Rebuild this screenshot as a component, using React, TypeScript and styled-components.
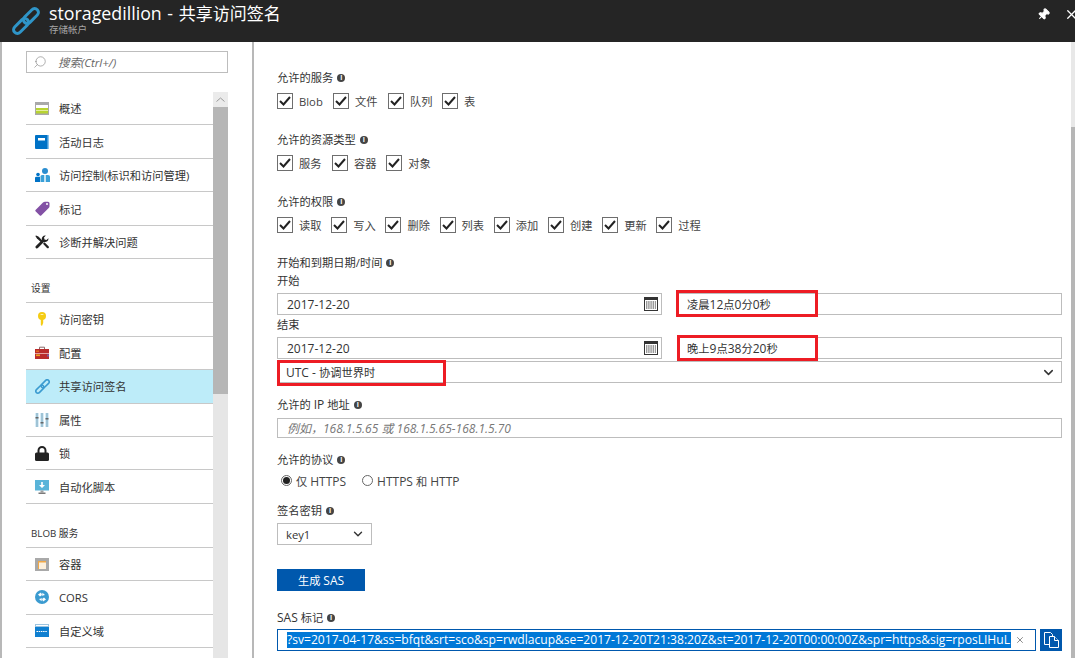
import React from "react";
import styled, { createGlobalStyle } from "styled-components";
import { Pin, X, ChevronDown, Search } from "lucide-react";

const FONT = `"Open Sans", "Noto Sans CJK SC", sans-serif`;

const Global = createGlobalStyle`
html, body {
    margin: 0;
    padding: 0;
    height: 100%;
    overflow: hidden;
    background: #fff;
}
* { box-sizing: border-box; }
body {
    font-family: ${FONT};
    font-size: 11.25px;
    color: #333;
}
`;

const Page = styled.div`
width: 1075px;
height: 658px;
display: flex;
flex-direction: column;
overflow: hidden;
`;

/* Latin runs sit a little larger than the CJK around them */
const Lat = styled.span`
font-size: 12px;
`;

/* Header */
const Header = styled.header`
height: 42px;
flex: none;
background: #252525;
display: flex;
align-items: center;
padding-left: 12px;
`;
const TitleBox = styled.div`
margin-left: 9px;
flex: 1;
display: flex;
flex-direction: column;
`;
const Title = styled.div`
font-size: 17px;
line-height: 20px;
color: #fff;
margin-top: -5px;
`;
const TitleLat = styled.span`
font-size: 17.8px;
word-spacing: 1px;
`;
const SubTitle = styled.div`
font-size: 9.5px;
line-height: 11px;
color: #a6a6a6;
`;
const HeaderTools = styled.div`
display: flex;
align-items: center;
width: 38px;
margin-top: -14px;
color: #fff;
overflow: hidden;
svg { flex: none; }
`;
const CloseMark = styled(X)`
margin-left: 14px;
`;

const Body = styled.div`
flex: 1;
display: flex;
min-height: 0;
`;

/* Sidebar */
const Sidebar = styled.aside`
width: 254px;
flex: none;
border-left: 2px solid #b8b8b8;
border-right: 2px solid #b8b8b8;
padding: 9px 24px 0 24px;
display: flex;
flex-direction: column;
`;
const SearchBox = styled.div`
height: 22px;
flex: none;
border: 1px solid #bdbdbd;
display: flex;
align-items: center;
padding-left: 6px;
color: #777;
font-size: 11.5px;
font-style: italic;
span { margin-left: 11px; color: #666; }
`;
const MenuWrap = styled.div`
margin-top: 19px;
display: flex;
flex: 1;
min-height: 0;
`;
const MenuList = styled.div`
flex: 1;
min-width: 0;
`;
const MenuRow = styled.div<{ $active?: boolean }>`
height: 33.45px;
display: flex;
align-items: center;
padding-left: 8px;
border-bottom: 1px solid #c8c8c8;
background: ${(p) => (p.$active ? "#bdecf9" : "transparent")};
color: #333;
white-space: nowrap;
`;
const MenuIcon = styled.span`
width: 16px;
height: 16px;
margin-right: 9px;
display: flex;
align-items: center;
justify-content: center;
flex: none;
`;
const SectionRow = styled.div`
height: 44px;
display: flex;
align-items: flex-end;
padding: 0 0 7px 5px;
border-bottom: 1px solid #c8c8c8;
font-size: 9.75px;
color: #333;
`;
const SideScroll = styled.div`
width: 15px;
flex: none;
background: #e6e6e6;
display: flex;
flex-direction: column;
`;
const ScrollUp = styled.div`
height: 15px;
background: #ebebeb;
display: flex;
align-items: center;
justify-content: center;
`;
const ScrollThumb = styled.div`
height: 287px;
background: #b6b6b6;
`;

/* Form */
const Main = styled.main`
flex: 1;
display: flex;
min-width: 0;
`;
const Form = styled.div`
flex: 1;
padding: 28px 9px 0 23px;
min-width: 0;
display: flex;
flex-direction: column;
`;
const PageScroll = styled.div`
width: 4px;
flex: none;
display: flex;
flex-direction: column;
background: #b6b6b6;
`;
const PageScrollTrack = styled.div`
height: 85px;
background: #e8e8e8;
`;

const FieldLabel = styled.div<{ $top?: number }>`
height: 16px;
line-height: 16px;
margin-top: ${(p) => p.$top ?? 0}px;
display: flex;
align-items: center;
color: #333;
white-space: pre;
`;
const Info = styled.span`
width: 8px;
height: 8px;
border-radius: 50%;
background: #444;
margin-left: 4px;
color: #fff;
font-size: 7px;
line-height: 8px;
font-weight: 700;
text-align: center;
flex: none;
`;
const CheckRow = styled.div`
display: flex;
margin-top: 7px;
height: 16px;
`;
const CheckItem = styled.label<{ $w?: number }>`
display: flex;
align-items: center;
width: ${(p) => p.$w ?? 54.2}px;
color: #444;
flex: none;
`;
const CheckBox = styled.span`
width: 16px;
height: 16px;
border: 1px solid #6e6e6e;
display: flex;
align-items: center;
justify-content: center;
margin-right: 6px;
flex: none;
`;
const TextBox = styled.div<{ $w?: number; $h?: number; $top?: number; $pl?: number; $pr?: number }>`
position: relative;
height: ${(p) => p.$h ?? 22}px;
width: ${(p) => (p.$w ? `${p.$w}px` : "100%")};
margin-top: ${(p) => p.$top ?? 0}px;
border: 1px solid #bdbdbd;
background: #fff;
display: flex;
align-items: center;
justify-content: space-between;
padding: 0 ${(p) => p.$pr ?? 5}px 0 ${(p) => p.$pl ?? 9}px;
color: #333;
white-space: pre;
`;
const BoxText = styled.span`
display: block;
`;
const Hint = styled.span`
font-style: italic;
color: #777;
font-size: 12px;
`;
const DateRow = styled.div<{ $top?: number }>`
display: grid;
grid-template-columns: 385px 1fr;
column-gap: 15px;
margin-top: ${(p) => p.$top ?? 0}px;
`;
const RedMark = styled.span<{ $t: number; $l: number; $w: number; $h: number }>`
position: absolute;
top: ${(p) => p.$t}px;
left: ${(p) => p.$l}px;
width: ${(p) => p.$w}px;
height: ${(p) => p.$h}px;
border: 3px solid #ed1c24;
pointer-events: none;
`;
const RadioRow = styled.div`
display: flex;
align-items: center;
margin-top: 5px;
margin-left: 4px;
height: 16px;
color: #444;
`;
const Radio = styled.span<{ $on?: boolean }>`
width: 11px;
height: 11px;
border-radius: 50%;
border: 1px solid #666;
margin-right: 4px;
display: flex;
align-items: center;
justify-content: center;
margin-top: -2px;
&::after {
    content: "";
    width: 7px;
    height: 7px;
    border-radius: 50%;
    background: ${(p) => (p.$on ? "#222" : "transparent")};
}
`;
const RadioText = styled.span`
margin-right: 16px;
white-space: pre;
`;
const PrimaryButton = styled.button`
display: block;
width: 88px;
height: 22px;
margin-top: 24px;
border: none;
background: #0058ad;
color: #fff;
font-family: ${FONT};
font-size: 11.25px;
padding: 0;
`;
const TokenRow = styled.div`
display: flex;
align-items: stretch;
margin-top: 3px;
gap: 4px;
height: 22px;
`;
const TokenBox = styled.div`
flex: 1;
min-width: 0;
border: 1px solid #0058ad;
display: flex;
align-items: center;
padding-left: 9px;
overflow: hidden;
`;
const Selected = styled.span`
width: 724px;
flex: none;
overflow: hidden;
white-space: nowrap;
background: #0078d7;
color: #fff;
font-size: 12.1px;
line-height: 16px;
`;
const Clear = styled.span`
margin-left: 4px;
display: flex;
color: #777;
`;
const CopyButton = styled.div`
width: 22px;
flex: none;
background: #0058ad;
display: flex;
align-items: center;
justify-content: center;
`;

/* Drawn icons */
const LinkMark = ({ size, stroke }: { size: number; stroke: string }) => (
    <svg width={size} height={size} viewBox="0 0 28 28" fill="none" stroke={stroke} strokeWidth="3">
        <g transform="rotate(-45 14 14)">
            <rect x="-2" y="10.2" width="18" height="7.6" rx="3.8" />
            <rect x="12" y="10.2" width="18" height="7.6" rx="3.8" />
        </g>
    </svg>
);
const Overview = () => (
    <svg width="14" height="13" viewBox="0 0 14 13">
        <rect width="14" height="13" fill="#a9a9a9" />
        <rect x="1" y="3" width="12" height="3" fill="#fff" />
        <rect x="1" y="6" width="12" height="5.5" fill="#b8d432" />
        <rect x="1" y="8" width="12" height="1" fill="#e4ee9e" />
    </svg>
);
const LogBook = () => (
    <svg width="14" height="14" viewBox="0 0 14 14">
        <rect width="14" height="14" rx="1" fill="#0072c6" />
        <rect x="12.5" width="1.5" height="14" fill="#8cc4ec" />
        <rect x="3" y="3" width="7" height="2.5" fill="#fff" />
    </svg>
);
const Access = () => (
    <svg width="15" height="14" viewBox="0 0 15 14">
        <circle cx="10" cy="3" r="3" fill="#2a8dd0" />
        <path d="M5.5 14V8.5q0-1.5 1.5-1.5h6q2 0 2 1.5V14z" fill="#3aa0d8" />
        <path d="M9.3 7h1.4v7H9.3z" fill="#fff" />
        <circle cx="3" cy="6.5" r="1.8" fill="#0072c6" />
        <path d="M0 14V10q0-1.3 1.3-1.3h3.7V14z" fill="#0072c6" />
    </svg>
);
const Tag = () => (
    <svg width="15" height="15" viewBox="0 0 15 15">
        <path d="M0.5 9 8 1.5q.8-.8 2-.8h3q1.5 0 1.5 1.5v3q0 1-.8 1.8L6.2 14.4q-.7.6-1.4 0L.5 10.2q-.5-.6 0-1.2z" fill="#8351a5" />
        <circle cx="12" cy="3" r="1" fill="#fff" />
    </svg>
);
const Tools = () => (
    <svg width="14" height="14" viewBox="0 0 14 14" fill="#222">
        <path d="M1 0.5 3.4 1.6 8 6.3 6.5 7.8 1.8 3.2.4 1z" />
        <path d="M13.4 3.2A3.4 3.4 0 0 1 8.9 6.9L2.9 13a1.4 1.4 0 0 1-2-2L7 5.1A3.4 3.4 0 0 1 10.8.6L9 2.5l.5 2 2 .5z" />
        <path d="M8 8.8 9.5 7.3 13.5 11.3a1.1 1.1 0 0 1-1.5 1.7z" />
    </svg>
);
const KeyMark = () => (
    <svg width="10" height="14" viewBox="0 0 10 14">
        <circle cx="5" cy="4" r="4" fill="#f5cc14" />
        <path d="M3.8 6h2.4v5L5 14 3.8 13z" fill="#f5cc14" />
        <rect x="3.6" y="2" width="2.8" height="1" fill="#fff3a8" />
    </svg>
);
const Toolbox = () => (
    <svg width="14" height="13" viewBox="0 0 14 13">
        <path d="M4.5 3V1.2h5V3" stroke="#8a6a6a" fill="none" />
        <rect y="3" width="14" height="10" fill="#ba2b2b" />
        <rect y="7" width="14" height="1" fill="#e4a0a0" />
        <rect x="1" y="8.5" width="4" height="1.6" fill="#eda51f" />
        <rect x="1" y="4.5" width="3" height="1.5" fill="#e06a1e" />
        <rect x="12" y="8.5" width="2" height="2" fill="#7a5aa8" />
    </svg>
);
const Sliders = () => (
    <svg width="14" height="14" viewBox="0 0 14 14">
        <rect x="0.5" width="3" height="14" fill="#b4dcf0" />
        <rect x="5.5" width="3" height="14" fill="#b4dcf0" />
        <rect x="10.5" width="3" height="14" fill="#b4dcf0" />
        <rect x="1.5" width="1" height="14" fill="#8aaaba" />
        <rect x="6.5" width="1" height="14" fill="#8aaaba" />
        <rect x="11.5" width="1" height="14" fill="#8aaaba" />
        <rect x="0.5" y="4" width="3" height="1.5" fill="#666" />
        <rect x="5.5" y="9" width="3" height="1.5" fill="#666" />
        <rect x="10.5" y="5" width="3" height="1.5" fill="#666" />
    </svg>
);
const Lock = () => (
    <svg width="14" height="15" viewBox="0 0 14 15">
        <path d="M3.5 7V4.5a3.5 3.5 0 0 1 7 0V7" fill="none" stroke="#222" strokeWidth="2" />
        <rect y="6.5" width="14" height="8.5" rx="1.5" fill="#222" />
    </svg>
);
const Monitor = () => (
    <svg width="14" height="14" viewBox="0 0 14 14">
        <rect width="14" height="10.5" fill="#59b4d9" />
        <path d="M6.2 2h1.6v3H10L7 8 4 5h2.2z" fill="#fff" />
        <rect x="5.5" y="10.5" width="3" height="2" fill="#a0a0a0" />
        <rect x="3.5" y="12.5" width="7" height="1.5" fill="#7a7a7a" />
    </svg>
);
const Container = () => (
    <svg width="14" height="13" viewBox="0 0 14 13">
        <rect width="14" height="13" fill="#a9a9a9" />
        <rect x="3" y="3" width="8" height="8" fill="#fdf0dc" />
        <rect x="3" y="3" width="8" height="1.5" fill="#f0a848" />
        <rect x="3" y="3" width="1" height="8" fill="#f0a848" />
    </svg>
);
const Cors = () => (
    <svg width="14" height="14" viewBox="0 0 14 14">
        <circle cx="7" cy="7" r="7" fill="#3b9bd0" />
        <path d="M3 4.500 6 2.500l1 2.500-2 1.500zM11 9.500 8 11.500l-1-2.500 2-1.500zM4 9l3-.8-.5 3zM10 5 7 5.800l.5-3z" fill="#fff" />
    </svg>
);
const DomainMark = () => (
    <svg width="14" height="13" viewBox="0 0 14 13">
        <rect width="14" height="13" fill="#0f7fd0" />
        <rect width="14" height="3" fill="#9cc4e0" />
        <rect x="1" y="1" width="12" height="1" fill="#fff" />
        <path d="M1.500 7.500h11" stroke="#fff" strokeDasharray="1.500 .7" />
    </svg>
);
const Calendar = () => (
    <svg width="14" height="14" viewBox="0 0 14 14">
        <rect x=".5" y=".5" width="13" height="13" fill="#fff" stroke="#333" />
        <rect width="14" height="3" fill="#333" />
        <path d="M2 5h10M2 7h10M2 9h10M2 11h10" stroke="#333" strokeDasharray="1.400 .8" />
    </svg>
);
const Copy = () => (
    <svg width="15" height="16" viewBox="0 0 15 16" fill="#0058ad" stroke="#fff">
        <path d="M.5.500h6l2 2v10h-8z" />
        <path d="M5.500 4.500h5l4 4v7h-9z" />
        <path d="M10.500 4.500v4h4" />
    </svg>
);
const Tick = () => (
    <svg width="12" height="10" viewBox="0 0 12 10" fill="none" stroke="#222" strokeWidth="2">
        <path d="M1 5l3.500 3.500L11 1" />
    </svg>
);

const topMenu = [
    { icon: <Overview />, text: "概述" },
    { icon: <LogBook />, text: "活动日志" },
    { icon: <Access />, text: "访问控制(标识和访问管理)" },
    { icon: <Tag />, text: "标记" },
    { icon: <Tools />, text: "诊断并解决问题" },
];
const settingsMenu = [
    { icon: <KeyMark />, text: "访问密钥" },
    { icon: <Toolbox />, text: "配置" },
    { icon: <LinkMark size={15} stroke="#3b9bd0" />, text: "共享访问签名", active: true },
    { icon: <Sliders />, text: "属性" },
    { icon: <Lock />, text: "锁" },
    { icon: <Monitor />, text: "自动化脚本" },
];
const blobMenu = [
    { icon: <Container />, text: "容器" },
    { icon: <Cors />, text: "CORS" },
    { icon: <DomainMark />, text: "自定义域" },
];

type MenuEntry = { icon: React.ReactNode; text: string; active?: boolean };
const MenuGroup = ({ items }: { items: MenuEntry[] }) => (
    <>
        {items.map((m) => (
            <MenuRow key={m.text} $active={m.active}>
                <MenuIcon>{m.icon}</MenuIcon>
                {m.text}
            </MenuRow>
        ))}
    </>
);

const Checks = ({ items }: { items: [string, number?][] }) => (
    <CheckRow>
        {items.map(([text, w]) => (
            <CheckItem key={text} $w={w}>
                <CheckBox><Tick /></CheckBox>
                {text}
            </CheckItem>
        ))}
    </CheckRow>
);

const Label = ({ top, children }: { top?: number; children: React.ReactNode }) => (
    <FieldLabel $top={top}>
        <span>{children}</span>
        <Info>i</Info>
    </FieldLabel>
);

const TOKEN =
    "?sv=2017-04-17&ss=bfqt&srt=sco&sp=rwdlacup&se=2017-12-20T21:38:20Z&st=2017-12-20T00:00:00Z&spr=https&sig=rposLIHuL";

export default function App() {
    return (
        <Page>
            <Global />
            <Header>
                <LinkMark size={28} stroke="#2f95c8" />
                <TitleBox>
                    <Title><TitleLat>storagedillion - </TitleLat>共享访问签名</Title>
                    <SubTitle>存储帐户</SubTitle>
                </TitleBox>
                <HeaderTools>
                    <Pin size={13} fill="#fff" style={{ transform: "rotate(45deg)" }} />
                    <CloseMark size={15} strokeWidth={2} />
                </HeaderTools>
            </Header>
            <Body>
                <Sidebar>
                    <SearchBox>
                        <Search size={14} strokeWidth={1} style={{ transform: "scaleX(-1)" }} />
                        <span>搜索(Ctrl+/)</span>
                    </SearchBox>
                    <MenuWrap>
                        <MenuList>
                            <MenuGroup items={topMenu} />
                            <SectionRow>设置</SectionRow>
                            <MenuGroup items={settingsMenu} />
                            <SectionRow>BLOB 服务</SectionRow>
                            <MenuGroup items={blobMenu} />
                        </MenuList>
                        <SideScroll>
                            <ScrollUp>
                                <svg width="9" height="5" viewBox="0 0 9 5" fill="none" stroke="#9a9a9a">
                                    <path d="M.5 4.500l4-3.500 4 3.500" />
                                </svg>
                            </ScrollUp>
                            <ScrollThumb />
                        </SideScroll>
                    </MenuWrap>
                </Sidebar>
                <Main>
                    <Form>
                        <Label>允许的服务</Label>
                        <Checks items={[["Blob", 56], ["文件", 55], ["队列", 54], ["表", 54]]} />
                        <Label top={23}>允许的资源类型</Label>
                        <Checks items={[["服务", 55], ["容器"], ["对象"]]} />
                        <Label top={23}>允许的权限</Label>
                        <Checks items={["读取", "写入", "删除", "列表", "添加", "创建", "更新", "过程"].map((t) => [t])} />
                        <Label top={22}>开始和到期日期/时间</Label>
                        <FieldLabel $top={2}>开始</FieldLabel>
                        <DateRow $top={4}>
                            <TextBox $pr={3}>
                                <Lat>2017-12-20</Lat>
                                <Calendar />
                            </TextBox>
                            <TextBox>
                                <BoxText>凌晨<Lat>12</Lat>点<Lat>0</Lat>分<Lat>0</Lat>秒</BoxText>
                                <RedMark $t={-4} $l={-2} $w={142} $h={27} />
                            </TextBox>
                        </DateRow>
                        <FieldLabel $top={2}>结束</FieldLabel>
                        <DateRow $top={4}>
                            <TextBox $pr={3}>
                                <Lat>2017-12-20</Lat>
                                <Calendar />
                            </TextBox>
                            <TextBox>
                                <BoxText>晚上<Lat>9</Lat>点<Lat>38</Lat>分<Lat>20</Lat>秒</BoxText>
                                <RedMark $t={-3} $l={-1} $w={141} $h={26} />
                            </TextBox>
                        </DateRow>
                        <TextBox $top={2} $pl={8}>
                            <BoxText><Lat>UTC - </Lat>协调世界时</BoxText>
                            <ChevronDown size={15} strokeWidth={2.4} color="#333" />
                            <RedMark $t={-2} $l={-1} $w={169} $h={26} />
                        </TextBox>
                        <Label top={14}>允许的 <Lat>IP</Lat> 地址</Label>
                        <TextBox $top={5} $h={20}>
                            <Hint>例如，168.1.5.65 或 168.1.5.65-168.1.5.70</Hint>
                        </TextBox>
                        <Label top={14}>允许的协议</Label>
                        <RadioRow>
                            <Radio $on />
                            <RadioText>仅 <Lat>HTTPS</Lat></RadioText>
                            <Radio />
                            <RadioText><Lat>HTTPS </Lat>和 <Lat>HTTP</Lat></RadioText>
                        </RadioRow>
                        <Label top={14}>签名密钥</Label>
                        <TextBox $top={4} $w={95} $pl={8} $pr={6}>
                            key1
                            <ChevronDown size={14} strokeWidth={2.4} color="#333" />
                        </TextBox>
                        <PrimaryButton>生成 <Lat>SAS</Lat></PrimaryButton>
                        <Label top={19}><Lat>SAS</Lat> 标记</Label>
                        <TokenRow>
                            <TokenBox>
                                <Selected>{TOKEN}</Selected>
                                <Clear><X size={10} strokeWidth={2} /></Clear>
                            </TokenBox>
                            <CopyButton><Copy /></CopyButton>
                        </TokenRow>
                    </Form>
                    <PageScroll>
                        <PageScrollTrack />
                    </PageScroll>
                </Main>
            </Body>
        </Page>
    );
}
